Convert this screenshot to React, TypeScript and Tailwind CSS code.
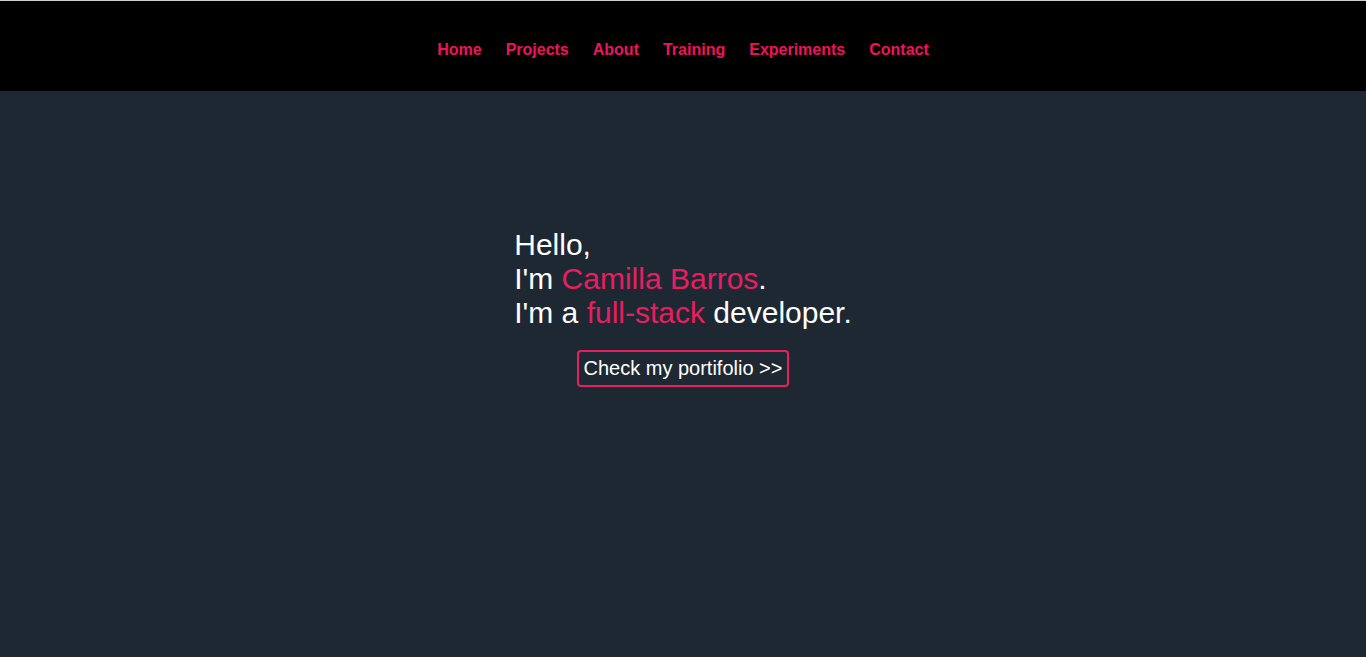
import React from "react";

const links = ["Home", "Projects", "About", "Training", "Experiments", "Contact"];

export default function App() {
  return (
    <div
      className="min-h-screen bg-[#1e2833] text-white"
      style={{ fontFamily: '"Liberation Sans", Arial, sans-serif' }}
    >
      <header className="h-[91px] border-t border-[#cfcfcf] bg-black flex items-center justify-center pt-[8px]">
        <nav className="flex gap-[24px]">
          {links.map((l) => (
            <a key={l} href="#" className="text-[16px] font-bold text-[#f0135b] leading-[18px]">
              {l}
            </a>
          ))}
        </nav>
      </header>
      <main className="flex flex-col items-center pt-[137px]">
        <div className="text-[30px] leading-[34px]">
          <div>Hello,</div>
          <div>
            I'm <span className="text-[#e91e5f]">Camilla Barros</span>.
          </div>
          <div>
            I'm a <span className="text-[#e91e5f]">full-stack</span> developer.
          </div>
        </div>
        <button className="mt-[20px] border-2 border-[#e91e5f] rounded-[4px] px-[5px] py-[4px] text-[20px] leading-[25px] text-white">
          Check my portifolio &gt;&gt;
        </button>
      </main>
    </div>
  );
}
